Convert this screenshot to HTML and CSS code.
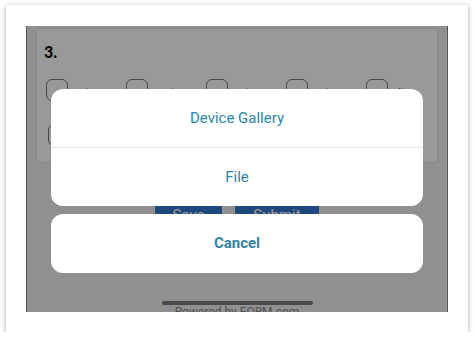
FILE: index.html
```html
<!DOCTYPE html>
<html lang="en">
<head>
  <meta charset="UTF-8" />
  <meta name="viewport" content="width=device-width, initial-scale=1" />
  <title>Upload | FORM</title>
  <link rel="stylesheet" href="styles.css">
</head>
<body>
  <div class="frame">
    <div class="screen">
      <!-- form underneath the sheet -->
      <section class="question-card">
        <h3 class="question-num">3.</h3>
        <div class="options">
          <label class="option"><span class="box"></span><span class="opt-text">ut</span></label>
          <label class="option"><span class="box"></span><span class="opt-text opt-wide">at</span></label>
          <label class="option"><span class="box"></span><span class="opt-text">ot</span></label>
          <label class="option"><span class="box"></span><span class="opt-text">nt</span></label>
          <label class="option"><span class="box"></span><span class="opt-text">it</span></label>
        </div>
        <div class="options second">
          <label class="option"><span class="box"></span></label>
        </div>
      </section>

      <div class="form-actions">
        <button class="btn btn-save">Save</button>
        <button class="btn btn-submit">Submit</button>
      </div>

      <div class="powered">Powered by FORM.com</div>

      <div class="overlay"></div>

      <!-- action sheet -->
      <div class="sheet">
        <div class="sheet-group">
          <div class="sheet-item">Device Gallery</div>
          <div class="sheet-item">File</div>
        </div>
        <div class="sheet-group">
          <div class="sheet-item cancel">Cancel</div>
        </div>
      </div>

      <div class="home-bar"></div>
    </div>
  </div>
</body>
</html>
```

FILE: styles.css
```css
body {
  margin: 0;
  background: #fff;
  font-family: Roboto, 'Liberation Sans', sans-serif;
}

.frame {
  margin: 5px 0 0 6px;
  width: 462px;
  height: 327px;
  box-sizing: border-box;
  padding: 21px 20px 20px 20px;
  background: #fff;
  box-shadow: 0 1px 5px rgba(0, 0, 0, 0.35);
}

.screen {
  position: relative;
  height: 286px;
  background: #f0f0f0;
  border-left: 1px solid #555;
  border-right: 1px solid #555;
  overflow: hidden;
}

.question-card {
  margin: 2px 9px 0 9px;
  height: 135px;
  box-sizing: border-box;
  background: #fff;
  border: 1px solid #e2e2e2;
  border-radius: 4px;
  padding: 14px 9px 0 7px;
  overflow: hidden;
}

.question-num {
  margin: 0 0 18px 0;
  font-family: Lato, sans-serif;
  font-size: 16px;
  font-weight: 900;
  line-height: 18px;
  color: #111;
}

.options {
  display: flex;
  padding-left: 2px;
}

.options.second {
  margin-top: 23px;
  padding-left: 4px;
}

.option {
  width: 80px;
  flex: none;
  display: flex;
  align-items: flex-start;
}

.box {
  width: 20px;
  height: 20px;
  border: 1px solid #777;
  border-radius: 6px;
  flex: none;
}

.opt-text {
  margin: 6px 0 0 10px;
  font-size: 13px;
  color: #333;
}

.opt-wide {
  margin-left: 16px;
}

.form-actions {
  display: flex;
  justify-content: center;
  gap: 13px;
  margin-top: 38px;
}

.btn {
  border: none;
  color: #fff;
  font-family: Roboto, sans-serif;
  font-size: 15px;
  height: 28px;
  padding: 0;
  background: #3479cf;
}

.btn-save { width: 67px; }
.btn-submit { width: 84px; }

.powered {
  position: absolute;
  left: 0;
  right: 0;
  top: 279px;
  text-align: center;
  font-size: 12px;
  color: #888;
}

.overlay {
  position: absolute;
  inset: 0;
  background: rgba(0, 0, 0, 0.4);
}

.sheet {
  position: absolute;
  left: 24px;
  top: 63px;
  width: 372px;
  display: flex;
  flex-direction: column;
  gap: 8px;
}

.sheet-group {
  background: #fff;
  border-radius: 12px;
  overflow: hidden;
}

.sheet-item {
  height: 58px;
  line-height: 58px;
  text-align: center;
  font-size: 15px;
  color: #2c86ab;
}

.sheet-item + .sheet-item {
  border-top: 1px solid #e3e3e3;
}

.sheet-item.cancel {
  height: 59px;
  line-height: 59px;
  font-weight: bold;
}

.home-bar {
  position: absolute;
  left: 135px;
  top: 275px;
  width: 151px;
  height: 4px;
  border-radius: 2px;
  background: #4a4a4a;
}
```
